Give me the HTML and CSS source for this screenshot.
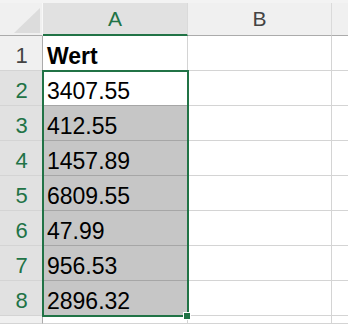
FILE: index.html
```html
<!DOCTYPE html>
<html>
<head>
<meta charset="utf-8">
<link rel="stylesheet" href="styles.css">
</head>
<body>
<div class="sheet">
  <div class="corner"><div class="tri"></div></div>
  <div class="colhead sel">A</div>
  <div class="colhead">B</div>
  <div class="colhead last"></div>

  <div class="rowhead">1</div>
  <div class="cell bold">Wert</div>
  <div class="cell"></div>
  <div class="cell last"></div>

  <div class="rowhead sel">2</div>
  <div class="cell active">3407.55</div>
  <div class="cell"></div>
  <div class="cell last"></div>

  <div class="rowhead sel">3</div>
  <div class="cell fill">412.55</div>
  <div class="cell"></div>
  <div class="cell last"></div>

  <div class="rowhead sel">4</div>
  <div class="cell fill">1457.89</div>
  <div class="cell"></div>
  <div class="cell last"></div>

  <div class="rowhead sel">5</div>
  <div class="cell fill">6809.55</div>
  <div class="cell"></div>
  <div class="cell last"></div>

  <div class="rowhead sel">6</div>
  <div class="cell fill">47.99</div>
  <div class="cell"></div>
  <div class="cell last"></div>

  <div class="rowhead sel">7</div>
  <div class="cell fill">956.53</div>
  <div class="cell"></div>
  <div class="cell last"></div>

  <div class="rowhead sel">8</div>
  <div class="cell fill">2896.32</div>
  <div class="cell"></div>
  <div class="cell last"></div>

  <div class="rowhead"></div>
  <div class="cell"></div>
  <div class="cell"></div>
  <div class="cell last"></div>

  <div class="selection"><div class="handle"></div></div>
</div>
</body>
</html>
```
FILE: styles.css
```css
html, body {
  margin: 0;
  padding: 0;
  background: #ffffff;
}
body {
  width: 348px;
  height: 324px;
  overflow: hidden;
  font-family: "Liberation Sans", Arial, sans-serif;
}
.sheet {
  position: relative;
  display: grid;
  grid-template-columns: 43px 145px 144px 1fr;
  grid-template-rows: 36px repeat(8, 35px) 8px;
  width: 348px;
  height: 324px;
  overflow: hidden;
  background: #f3f3f3;
}
.corner {
  box-sizing: border-box;
  background: #f0f0f0;
  border-bottom: 1px solid #ababab;
  border-right: 1px solid #f8f8f8;
  margin-top: 3px;
  position: relative;
}
.tri {
  position: absolute;
  left: 14px;
  top: 5px;
  width: 26px;
  height: 25px;
  background: #dcdcdc;
  clip-path: polygon(100% 0, 100% 100%, 0 100%);
}
.colhead {
  box-sizing: border-box;
  margin-top: 3px;
  background: #f0f0f0;
  border-bottom: 1px solid #ababab;
  border-right: 1px solid #dadada;
  color: #444444;
  font-size: 21px;
  display: flex;
  align-items: center;
  justify-content: center;
  padding-bottom: 1px;
}
.colhead.sel {
  background: #e1e1e1;
  color: #217346;
  border-bottom: 2px solid #217346;
  padding-bottom: 0;
}
.colhead.last {
  border-right: none;
}
.rowhead {
  box-sizing: border-box;
  background: #f0f0f0;
  border-right: 1px solid #ababab;
  border-bottom: 1px solid #d4d4d4;
  color: #444444;
  font-size: 22px;
  display: flex;
  align-items: flex-end;
  justify-content: center;
  line-height: 26px;
  padding-bottom: 1px;
  padding-left: 1px;
  overflow: hidden;
}
.rowhead.sel {
  background: #e1e1e1;
  color: #217346;
}
.cell {
  box-sizing: border-box;
  background: #ffffff;
  border-right: 1px solid #d4d4d4;
  border-bottom: 1px solid #d4d4d4;
  font-size: 23px;
  color: #000000;
  display: flex;
  align-items: flex-end;
  line-height: 26px;
  padding-left: 4px;
  padding-bottom: 1px;
  white-space: nowrap;
  overflow: hidden;
}
.cell.last {
  border-right: none;
}
.cell.bold {
  font-weight: bold;
}
.cell.fill {
  background: #c6c6c6;
  border-bottom-color: #a6a6a6;
}
.cell.active {
  border-bottom-color: #a6a6a6;
}
.selection {
  position: absolute;
  left: 42px;
  top: 70px;
  width: 147px;
  height: 247px;
  box-sizing: border-box;
  border: 2px solid #217346;
  pointer-events: none;
}
.handle {
  position: absolute;
  right: -4px;
  bottom: -5px;
  width: 6px;
  height: 6px;
  background: #217346;
  border: 1px solid #ffffff;
}
```
